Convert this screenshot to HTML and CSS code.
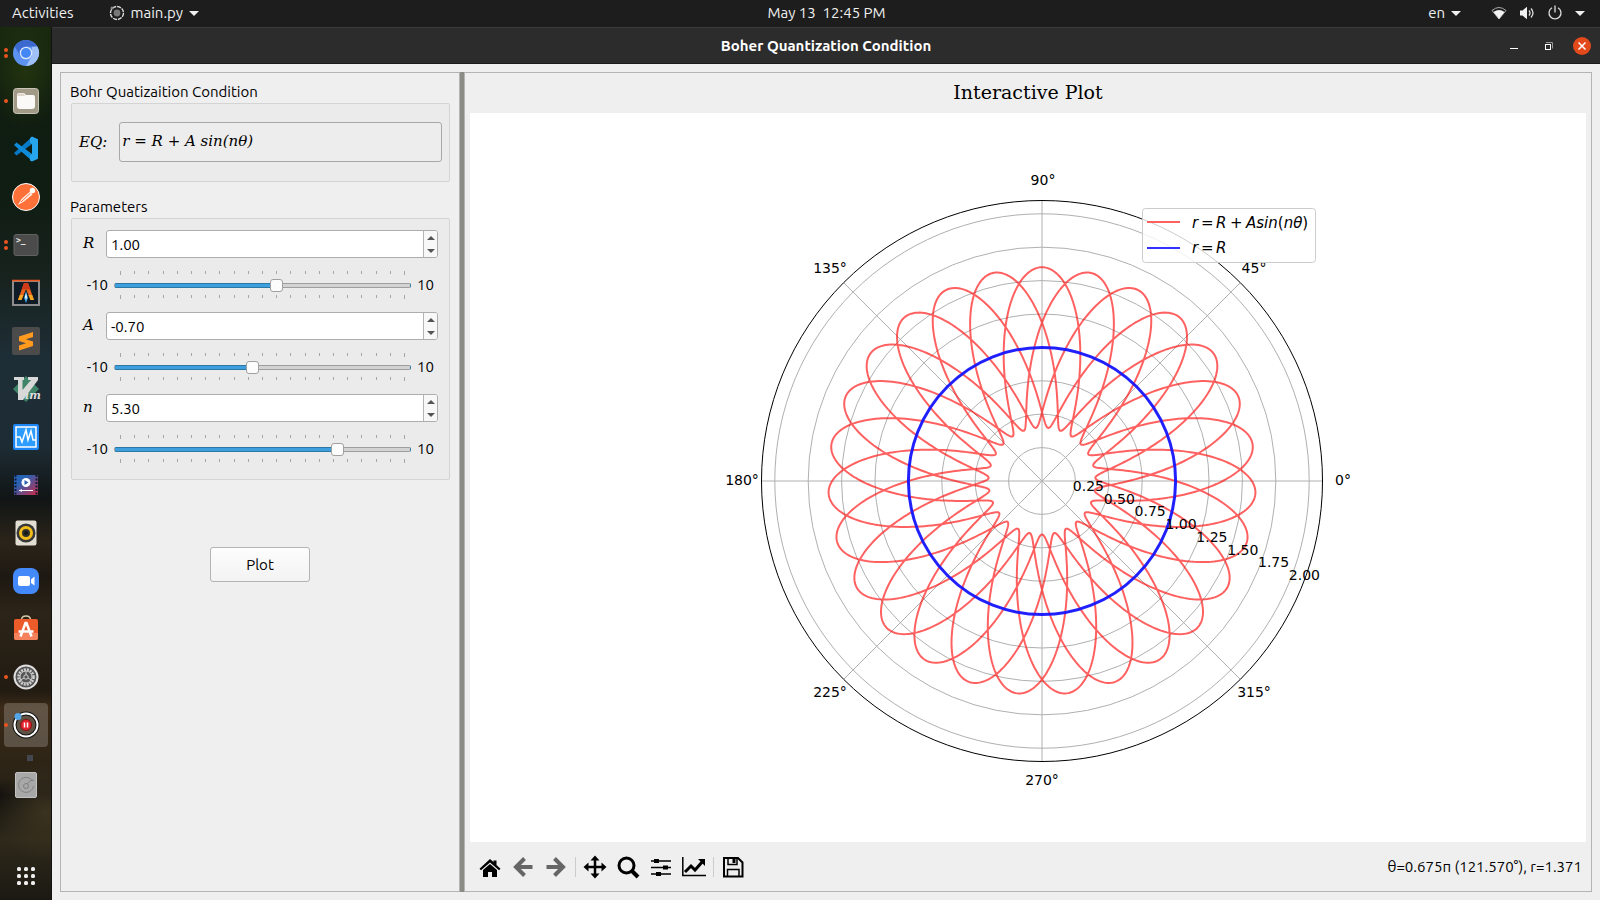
FILE: index.html
```html
<!DOCTYPE html>
<html lang="en">
<head>
<meta charset="utf-8">
<title>Boher Quantization Condition</title>
<link rel="stylesheet" href="styles.css">
</head>
<body>
<header class="topbar">
  <div class="top-left">
    <button class="top-btn">Activities</button>
    <button class="top-btn app-menu">
      <svg width="16" height="16" viewBox="0 0 16 16"><circle cx="8" cy="8" r="6.500" fill="none" stroke="#ddd" stroke-width="1.400" stroke-dasharray="4 1"/><circle cx="8" cy="8" r="3.400" fill="#777"/><circle cx="3" cy="3" r="1.500" fill="#888"/></svg>
      <span>main.py</span><i class="caret"></i>
    </button>
  </div>
  <button class="top-btn clock">May 13&nbsp; 12:45 PM</button>
  <div class="top-right">
    <button class="top-btn lang"><span>en</span><i class="caret"></i></button>
    <button class="top-btn tray" aria-label="System menu">
      <svg width="16" height="14" viewBox="0 0 16 14"><path d="M1 4.500Q8-1.500 15 4.500L8 13z" fill="none" stroke="#aaa"/><path d="M2.500 6Q8 2 13.500 6L8 13z" fill="#f2f2f2"/></svg>
      <svg width="16" height="14" viewBox="0 0 16 14"><path d="M1 4.500h2.500L8 .8v12.400L3.500 9.500H1z" fill="#f2f2f2"/><path d="M10 4.500q2 2.500 0 5M12 2.500q4 4.500 0 9" fill="none" stroke="#ddd" stroke-width="1.300"/></svg>
      <svg width="16" height="16" viewBox="0 0 16 16"><path d="M5 2.700a6 6 0 1 0 6 0M8 .5v7" fill="none" stroke="#ddd" stroke-width="1.300"/></svg>
      <i class="caret"></i>
    </button>
  </div>
</header>
<div class="desktop">
  <nav class="dock" aria-label="Dock">
    <button class="dock-item two" aria-label="Chromium"><svg width="28" height="28" viewBox="0 0 28 28"><circle cx="14" cy="14" r="13" fill="#5c93f0"/><path d="M2.700 7.500A13 13 0 0 1 25.300 7.500H14L8.500 17z" fill="#3b69cf"/><path d="M25.300 7.500A13 13 0 0 1 14 27l5.500-9.500L20 8z" fill="#a0c1f8"/><circle cx="14" cy="14" r="6.300" fill="#dce9fd"/><circle cx="14" cy="14" r="5" fill="#4387f4"/></svg></button>
    <button class="dock-item one" aria-label="Files"><svg width="28" height="28" viewBox="0 0 28 28"><rect x="1.500" y="1.500" width="25" height="25" rx="3" fill="#a09a87" stroke="#c9c5b8"/><path d="M5 8q0-2 2-2h5l2 2h7q2 0 2 2v9q0 3-3 3H8q-3 0-3-3z" fill="#faf9f7"/><path d="M5.500 9V8q0-1.500 1.500-1.500h4.700l1.500 2.500z" fill="#ddd8cb"/></svg></button>
    <button class="dock-item" aria-label="Visual Studio Code"><svg width="28" height="28" viewBox="0 0 28 28"><path d="M20 2v7L4.500 20.500 2 18z" fill="#0879c4"/><path d="M20 26v-7L4.500 7.500 2 10z" fill="#0f8bd8"/><path d="M20 1.500l6 2.700v19.600l-6 2.700-2-1V20l2-1V9l-2-1V3z" fill="#27a5ec"/></svg></button>
    <button class="dock-item" aria-label="Postman"><svg width="30" height="30" viewBox="0 0 30 30"><circle cx="15" cy="15" r="13.500" fill="#ff7139" stroke="#fff"/><circle cx="21.500" cy="8.500" r="2.700" fill="#fff"/><path d="M19 9.500l2.500 3-8.500 7-6 3.500 3.500-6z" fill="#fff0e8"/><path d="M10 20l9-8.500" stroke="#ff7139"/></svg></button>
    <button class="dock-item two" aria-label="Terminal"><svg width="28" height="28" viewBox="0 0 28 28"><rect x="2" y="3.500" width="24" height="21" rx="2" fill="#4b4b4b" stroke="#626262"/><text x="4" y="12" class="prompt">&gt;_</text></svg></button>
    <button class="dock-item" aria-label="Alacritty"><svg width="30" height="30" viewBox="0 0 30 30"><rect x="2" y="3" width="26" height="24" fill="#0f1c25" stroke="#8d8d8d" stroke-width="2"/><path d="M1 2.500h28" stroke="#e8571b" stroke-width="1.500"/><path d="M13 5h4l6 17h-3.500L15 11l-4.500 11H7z" fill="#e8631b"/><path d="M13 5h4l2.500 7L15 11l-4.500 1z" fill="#d03a1a"/><path d="M19.500 22l-2-5h3.700L23 22zM10.500 22l2-5H8.800L7 22z" fill="#f7a823"/><path d="M15 13l2 7-2 5-2-5z" fill="#38a0dd"/><path d="M15 15l1 4-1 3-1-3z" fill="#fff"/></svg></button>
    <button class="dock-item" aria-label="Sublime Text"><svg width="28" height="28" viewBox="0 0 28 28"><rect width="28" height="28" rx="2" fill="#4b4b4b"/><path d="M7 9.500L21 5v5l-7 2.300 7 2.200v4.500L7 23.500v-5l7-2.200-7-2.300z" fill="#ff9a1f"/></svg></button>
    <button class="dock-item" aria-label="Vim"><svg width="30" height="28" viewBox="0 0 30 28"><path d="M15 1l13 13-13 13L2 14z" fill="#3f8368"/><path d="M3 2h10v3h-1.500v10L20 5h-3V2h10v3L12 25H7V5H3z" fill="#d8d8d8"/><text x="14" y="24" class="vim">im</text></svg></button>
    <button class="dock-item" aria-label="System Monitor"><svg width="28" height="28" viewBox="0 0 28 28"><rect x="1" y="1" width="26" height="26" rx="2" fill="#1d86f4"/><rect x="4" y="4" width="20" height="20" fill="#2d9cff" stroke="#fff" stroke-width="1.500"/><path d="M4 14h4l2 5 4-12 2 10 3-9 2 9h3" fill="none" stroke="#fff" stroke-width="1.500"/></svg></button>
    <button class="dock-item video" aria-label="Video editor"><svg width="28" height="22" viewBox="0 0 28 22"><defs><linearGradient id="vid" x2="1" y2="1"><stop offset=".3" stop-color="#2862b4"/><stop offset="1" stop-color="#d02b46"/></linearGradient></defs><rect x="2" y="1" width="24" height="20" fill="url(#vid)"/><path d="M3.500 1v20M24.500 1v20" stroke="#101b38" stroke-width="2" stroke-dasharray="2 1.500"/><circle cx="14" cy="8.500" r="4.500" fill="#fff"/><path d="M12.500 6v5l4-2.500z" fill="#2862b4"/><path d="M7 16.500h14" stroke="#fff"/><path d="M7 16.500l3-1.500v3z" fill="#fff"/></svg></button>
    <button class="dock-item" aria-label="Rhythmbox"><svg width="28" height="28" viewBox="0 0 28 28"><rect x="3.500" y="1.500" width="21" height="25" rx="2" fill="#e2ded3"/><circle cx="14" cy="14" r="9.500" fill="#383838"/><circle cx="14" cy="14" r="5.500" fill="#30302c" stroke="#f2bd18" stroke-width="3"/><circle cx="14" cy="14" r="2" fill="#181818"/></svg></button>
    <button class="dock-item" aria-label="Zoom"><svg width="28" height="28" viewBox="0 0 28 28"><rect x="1" y="1" width="26" height="26" rx="8" fill="#4389fa"/><rect x="6" y="9" width="12" height="10" rx="2" fill="#fff"/><path d="M19 12.500L22.500 9.500v9L19 16z" fill="#fff"/></svg></button>
    <button class="dock-item" aria-label="Ubuntu Software"><svg width="28" height="28" viewBox="0 0 28 28"><path d="M9.500 5q0-4 4.500-4t4.500 4" fill="none" stroke="#d8c8a8" stroke-width="1.500"/><rect x="2" y="4" width="24" height="21" rx="2" fill="#ee5b2b"/><path d="M2 18h24v5q0 2-2 2H4q-2 0-2-2z" fill="#f5825c"/><path d="M8.500 21.500L13.500 8h1l5 13.500M6.500 16.500h15" fill="none" stroke="#fff" stroke-width="2.500"/></svg></button>
    <button class="dock-item one" aria-label="Settings"><svg width="28" height="28" viewBox="0 0 28 28"><circle cx="14" cy="14" r="11.500" fill="#555" stroke="#dedede" stroke-width="2"/><circle cx="14" cy="14" r="7.500" fill="none" stroke="#cfcfcf" stroke-width="2.500" stroke-dasharray="2 1"/><circle cx="14" cy="14" r="6" fill="none" stroke="#cfcfcf"/><path d="M14 14V8M14 14l5.500 3M14 14l-5.500 3" stroke="#cfcfcf"/><circle cx="14" cy="14" r="2.200" fill="#555" stroke="#cfcfcf"/></svg></button>
    <button class="dock-item one active" aria-label="main.py"><svg width="30" height="30" viewBox="0 0 30 30"><circle cx="15" cy="15" r="11.500" fill="none" stroke="#111" stroke-width="4"/><circle cx="15" cy="15" r="11.500" fill="none" stroke="#fff" stroke-width="2"/><circle cx="7" cy="6.500" r="3.500" fill="#54a6e8"/><circle cx="15" cy="15" r="5.500" fill="#e3222e" stroke="#811"/><path d="M13.500 12.500v5M16.500 12.500v5" stroke="#fff" stroke-width="1.500"/></svg></button>
    <i class="dock-mark"></i>
    <button class="dock-item" aria-label="Disk"><svg width="28" height="28" viewBox="0 0 28 28"><rect x="3.500" y="1.500" width="21" height="25" rx="1.500" fill="#a8a8a8" stroke="#c2c2c2"/><path d="M20.500 10a7.500 7.500 0 1 0 1 5" fill="none" stroke="#808080"/><circle cx="14" cy="15" r="2.500" fill="none" stroke="#808080"/><path d="M15 13q4-5 7-4" fill="none" stroke="#808080"/></svg></button>
    <button class="dock-item apps" aria-label="Show applications"><svg width="20" height="20" viewBox="0 0 20 20" fill="#eee"><rect x="1" y="1" width="4" height="4" rx="1.500"/><rect x="8" y="1" width="4" height="4" rx="1.500"/><rect x="15" y="1" width="4" height="4" rx="1.500"/><rect x="1" y="8" width="4" height="4" rx="1.500"/><rect x="8" y="8" width="4" height="4" rx="1.500"/><rect x="15" y="8" width="4" height="4" rx="1.500"/><rect x="1" y="15" width="4" height="4" rx="1.500"/><rect x="8" y="15" width="4" height="4" rx="1.500"/><rect x="15" y="15" width="4" height="4" rx="1.500"/></svg></button>
  </nav>
  <section class="window">
    <div class="titlebar">
      <h1 class="title">Boher Quantization Condition</h1>
      <div class="controls">
        <button aria-label="Minimize"><svg width="18" height="18"><path d="M5 11.500h8" stroke="#fff"/></svg></button>
        <button aria-label="Restore"><svg width="18" height="18"><path d="M7 5.500h6.500v6" fill="none" stroke="#999"/><rect x="6.500" y="7.500" width="5" height="5" fill="none" stroke="#fff"/></svg></button>
        <button aria-label="Close"><svg width="18" height="18"><circle cx="9" cy="9" r="9" fill="#e2491b"/><path d="M5.500 5.500l7 7M12.500 5.500l-7 7" stroke="#fff" stroke-width="1.500"/></svg></button>
      </div>
    </div>
    <main class="content">
      <form class="side" onsubmit="return false">
        <h2 class="group-title">Bohr Quatizaition Condition</h2>
        <div class="group eq-group">
          <label class="math" for="eq">EQ:</label>
          <input class="eq-input" id="eq" type="text" value="r = R + A sin(nθ)" readonly>
        </div>
        <h2 class="group-title params-title">Parameters</h2>
        <div class="group params">
          <div class="param">
            <label class="math" for="R">R</label>
            <div class="spin"><input id="R" type="number" min="-10" max="10" step="0.01" value="1.00"><div class="steps"><button type="button" aria-label="Increase R"><i class="up"></i></button><button type="button" aria-label="Decrease R"><i class="down"></i></button></div></div>
          </div>
          <div class="slide"><span class="min">-10</span><div class="track"><div class="ticks"></div><input type="range" aria-label="R" min="-10" max="10" step="0.1" value="1"><div class="ticks"></div></div><span>10</span></div>
          <div class="param">
            <label class="math" for="A">A</label>
            <div class="spin"><input id="A" type="number" min="-10" max="10" step="0.01" value="-0.70"><div class="steps"><button type="button" aria-label="Increase A"><i class="up"></i></button><button type="button" aria-label="Decrease A"><i class="down"></i></button></div></div>
          </div>
          <div class="slide"><span class="min">-10</span><div class="track"><div class="ticks"></div><input type="range" aria-label="A" min="-10" max="10" step="0.1" value="-0.7"><div class="ticks"></div></div><span>10</span></div>
          <div class="param">
            <label class="math" for="n">n</label>
            <div class="spin"><input id="n" type="number" min="-10" max="10" step="0.01" value="5.30"><div class="steps"><button type="button" aria-label="Increase n"><i class="up"></i></button><button type="button" aria-label="Decrease n"><i class="down"></i></button></div></div>
          </div>
          <div class="slide"><span class="min">-10</span><div class="track"><div class="ticks"></div><input type="range" aria-label="n" min="-10" max="10" step="0.1" value="5.3"><div class="ticks"></div></div><span>10</span></div>
        </div>
        <button class="plot-btn" type="button">Plot</button>
      </form>
      <div class="splitter"></div>
      <section class="plot-pane">
        <h2 class="plot-title">Interactive Plot</h2>
        <svg class="chart" viewBox="-572 -368 1116 729" role="img" aria-label="Polar plot">
          <g id="grid" class="grid"></g>
          <path id="curve" class="curve"/>
          <circle class="base" r="133.600"/>
          <circle class="frame" r="280.500"/>
          <g class="angles">
            <text x="293" y="4" class="start">0°</text>
            <text x="212" y="-208">45°</text>
            <text x="1" y="-296">90°</text>
            <text x="-212" y="-208">135°</text>
            <text x="-300" y="4">180°</text>
            <text x="-212" y="216">225°</text>
            <text x="0" y="304">270°</text>
            <text x="212" y="216">315°</text>
          </g>
          <g id="radii" class="radii"></g>
          <g class="legend">
            <rect x="100.500" y="-272.500" width="173" height="54" rx="3"/>
            <path d="M105 -259h33" class="key red"/>
            <path d="M105 -233h33" class="key blue"/>
            <text y="-253"><tspan x="150">r</tspan><tspan x="159" class="op">=</tspan><tspan x="174">R</tspan><tspan x="188" class="op">+</tspan><tspan x="204">Asin</tspan><tspan class="op">(</tspan><tspan>nθ</tspan><tspan class="op">)</tspan></text>
            <text y="-228"><tspan x="150">r</tspan><tspan x="159" class="op">=</tspan><tspan x="174">R</tspan></text>
          </g>
        </svg>
        <div class="toolbar">
          <button aria-label="Home"><svg width="24" height="24" viewBox="0 0 24 24"><path d="M12 4l3.500 3V5.500h3V10l4 3.700-1.500 1.500L12 7.500l-9 7.700-1.500-1.500z"/><path d="M12 9l7 6v7h-5v-5h-4v5H5v-7z"/></svg></button>
          <button aria-label="Back"><svg width="24" height="24" viewBox="0 0 24 24"><path d="M21.500 12H5M13.500 3.500L5 12l8.500 8.500" fill="none" stroke="#666" stroke-width="4"/></svg></button>
          <button aria-label="Forward"><svg width="24" height="24" viewBox="0 0 24 24"><path d="M2.500 12H19M10.500 3.500L19 12l-8.500 8.500" fill="none" stroke="#666" stroke-width="4"/></svg></button>
          <i class="sep"></i>
          <button aria-label="Pan"><svg width="24" height="24" viewBox="0 0 24 24"><path d="M12 3v18M3 12h18" stroke="#000" stroke-width="2.500"/><path d="M12 .5l4.500 5h-9zM12 23.500l4.500-5h-9zM.5 12l5-4.500v9zM23.500 12l-5-4.500v9z"/></svg></button>
          <button aria-label="Zoom to rectangle"><svg width="24" height="24" viewBox="0 0 24 24"><circle cx="10.500" cy="10.500" r="7.500" fill="none" stroke="#000" stroke-width="3"/><path d="M16 16l6 6" stroke="#000" stroke-width="4"/></svg></button>
          <button aria-label="Configure subplots"><svg width="24" height="24" viewBox="0 0 24 24"><path d="M2 6h20M2 12.500h20M2 19h20" stroke="#000" stroke-width="1.500"/><path d="M5 4h5v4H5zM14 10.500h5v4h-5zM7 17h5v4H7z"/></svg></button>
          <button aria-label="Edit axes"><svg width="24" height="24" viewBox="0 0 24 24"><path d="M.8 2v18.500H24" fill="none" stroke="#000" stroke-width="1.500"/><path d="M3 17l6-6 4 4 8-9" fill="none" stroke="#000" stroke-width="3"/><path d="M16 4h7v7z"/></svg></button>
          <i class="sep"></i>
          <button aria-label="Save"><svg width="24" height="24" viewBox="0 0 24 24"><path d="M3 3h14l4.500 4.500v14H3z" fill="none" stroke="#000" stroke-width="2"/><path d="M7 3v6.500h9V3M6.500 21.500V14.500h11.500v7" fill="none" stroke="#000" stroke-width="1.500"/><path d="M11.500 3.500h3V8h-3z"/></svg></button>
          <output class="coords">θ=0.675π (121.570°), r=1.371</output>
        </div>
      </section>
    </main>
  </section>
</div>
<script src="script.js"></script>
</body>
</html>
```
FILE: styles.css
```css
* { box-sizing: border-box; }
body {
  margin: 0;
  height: 100vh;
  display: flex;
  flex-direction: column;
  overflow: hidden;
  font: 15px/20px "Ubuntu", "Noto Sans", sans-serif;
  color: #000;
  background: #efefef;
}
button { font: inherit; color: inherit; padding: 0; border: 0; background: none; }
h1, h2 { margin: 0; font: inherit; }
svg { display: block; flex: none; }

.topbar {
  display: grid;
  grid-template-columns: 1fr auto 1fr;
  align-items: center;
  height: 27px;
  padding: 0 15px 1px 12px;
  background: #1d1d1d;
  color: #f0f0f0;
  flex: none;
}
.top-left, .top-right, .top-btn { display: flex; align-items: center; }
.top-left { gap: 35px; }
.top-right { justify-content: flex-end; gap: 30px; }
.clock { padding-left: 56px; }
.app-menu, .lang { gap: 6px; }
.tray { gap: 12px; }
.caret { border: 5px solid transparent; border-top-color: #f0f0f0; border-bottom: 0; }

.desktop { flex: 1; display: flex; min-height: 0; }
.dock {
  width: 52px;
  flex: none;
  display: flex;
  flex-direction: column;
  align-items: center;
  padding-top: 2px;
  background:
    radial-gradient(40px 60px at 50% 5%, #22330f 0, transparent 100%),
    radial-gradient(50px 50px at 90% 90%, #3b3320 0, transparent 100%),
    linear-gradient(#17280f 0, #0f1c10 8%, #101d13 20%, #18231f 29%, #1e2e37 38%, #1d2c34 48%, #111515 54%, #2b241a 59%, #1d1811 63%, #2c2418 67%, #211b12 76%, #3b2a17 78%, #2a2316 86%, #14120f 88%, #2e291a 93%, #1c1913 100%);
  border-right: 1px solid #111;
}
.dock-item {
  position: relative;
  width: 44px;
  height: 44px;
  margin: 2px 0;
  flex: none;
  display: flex;
  align-items: center;
  justify-content: center;
}
.active { background: rgba(255, 255, 255, .2); border-radius: 4px; }
.one::before, .two::before, .two::after {
  content: "";
  position: absolute;
  left: 0;
  top: 20px;
  width: 4px;
  height: 4px;
  border-radius: 50%;
  background: #e95420;
}
.two::before { top: 17px; }
.two::after { top: 23px; }
.dock-mark { width: 6px; height: 6px; margin: 6px 0 0 8px; background: #454750; flex: none; }
.apps { margin-top: auto; }
.prompt { font: bold 8px "DejaVu Sans Mono", monospace; fill: #eee; }
.vim { font: italic bold 11px "DejaVu Serif", serif; fill: #ddd; }

.window { flex: 1; min-width: 0; display: flex; flex-direction: column; }
.titlebar {
  position: relative;
  display: flex;
  align-items: center;
  justify-content: center;
  height: 37px;
  flex: none;
  background: #2c2c2c;
  border-top: 1px solid #3a3a3a;
  border-bottom: 1px solid #1c1c1c;
  color: #fff;
}
.title { font-weight: 700; }
.controls { position: absolute; right: 9px; display: flex; gap: 16px; }

.content {
  flex: 1;
  min-height: 0;
  display: grid;
  grid-template-columns: 400px 4px 1fr;
  padding: 8px;
}
.side, .plot-pane { display: flex; flex-direction: column; border: 1px solid #b4b4b4; min-height: 0; }
.side { padding: 9px; }
.splitter { background: #8c8c86; }
.group { margin: 1px 0 0 1px; border: 1px solid #d4d4d4; border-radius: 2px; background: #ebebeb; }
.math { font: italic 15px/20px "DejaVu Serif", serif; }
.eq-group { display: flex; align-items: center; gap: 12px; height: 79px; padding: 0 7px 1px; }
.eq-input {
  flex: 1;
  min-width: 0;
  height: 40px;
  padding: 0 2px 3px;
  border: 1px solid #a8a8a8;
  border-radius: 3px;
  background: #ededed;
  font: italic 15px "DejaVu Serif", serif;
}
.params-title { margin-top: 15px; }
.params { padding: 11px 11px 3px; }
.param { display: flex; gap: 11px; height: 28px; }
.param .math { width: 12px; line-height: 26px; }
.spin { flex: 1; display: flex; border: 1px solid #adadad; border-radius: 3px; background: #fff; overflow: hidden; }
.spin input { flex: 1; min-width: 0; border: 0; padding: 1px 4px 0; font: inherit; background: none; appearance: textfield; }
.spin input::-webkit-inner-spin-button { appearance: none; margin: 0; }
.steps { width: 14px; display: flex; flex-direction: column; border-left: 1px solid #b4b4b4; background: #f8f8f8; }
.steps button { flex: 1; display: flex; align-items: center; justify-content: center; }
.up, .down { border: 4px solid transparent; border-top: 0; border-bottom-color: #555; }
.down { border-top: 4px solid #555; border-bottom: 0; }
.slide { display: flex; align-items: center; gap: 6px; height: 54px; padding-right: 4px; }
.slide .min { width: 25px; text-align: right; }
.track { flex: 1; display: flex; flex-direction: column; }
.ticks { display: flex; justify-content: space-between; height: 4px; padding: 0 6px; }
.ticks i { width: 1px; height: 3px; background: #a5a5a5; }
.ticks i:first-child, .ticks i:last-child { height: 4px; }
.track input {
  appearance: none;
  width: 100%;
  height: 20px;
  margin: 0;
  background: none;
}
.track input::-webkit-slider-runnable-track {
  height: 5px;
  border: 1px solid rgba(0, 0, 0, .25);
  border-radius: 2px;
  background: linear-gradient(90deg, #3d9fdd var(--fill), #d3d3d3 var(--fill));
}
.track input::-webkit-slider-thumb {
  appearance: none;
  width: 13px;
  height: 13px;
  margin-top: -5px;
  border: 1px solid #a0a0a0;
  border-radius: 3px;
  background: #fcfcfc;
}
.plot-btn {
  align-self: center;
  width: 100px;
  height: 35px;
  margin-top: 67px;
  border: 1px solid #b4b4b4;
  border-radius: 3px;
  background: linear-gradient(#fdfdfd, #f3f3f3);
}

.plot-title { height: 40px; text-align: center; font: 19px/38px "DejaVu Serif", serif; flex: none; }
.chart { flex: 1; min-height: 0; margin: 0 5px; background: #fff; font-family: "DejaVu Sans", sans-serif; }
.grid { fill: none; stroke: #b0b0b0; stroke-width: 1; }
.curve { fill: none; stroke: #ff0000; stroke-opacity: .62; stroke-width: 2; stroke-linejoin: round; }
.base { fill: none; stroke: #1616ff; stroke-opacity: .95; stroke-width: 3; }
.frame { fill: none; stroke: #000; stroke-width: 1; }
.angles { font-size: 14px; text-anchor: middle; }
.angles .start { text-anchor: start; }
.radii { font-size: 14px; }
.legend { font-size: 15px; font-style: oblique; }
.legend rect { fill: #fff; fill-opacity: .8; stroke: #ccc; }
.op { font-style: normal; }
.key { stroke-width: 2; }
.red { stroke: #ff6161; }
.blue { stroke: #3333ff; }

.toolbar { display: flex; align-items: center; gap: 9px; height: 49px; padding: 0 9px 0 13px; flex: none; }
.sep { width: 1px; height: 20px; margin: 0 -2px; background: #ccc; }
.coords { margin-left: auto; }
```
FILE: script.js
```js
const NS = "http://www.w3.org/2000/svg";
const UNIT = 133.6;

function add(parent, name, attrs, text) {
  const el = document.createElementNS(NS, name);
  for (const key in attrs) el.setAttribute(key, attrs[key]);
  if (text) el.textContent = text;
  parent.appendChild(el);
}

const grid = document.getElementById("grid");
const radii = document.getElementById("radii");
for (let i = 1; i <= 8; i++) {
  const r = UNIT * i / 4;
  add(grid, "circle", { r });
  const a = 22.5 * Math.PI / 180;
  add(radii, "text", { x: r * Math.cos(a), y: r * Math.sin(a) - 3 }, (i / 4).toFixed(2));
}
for (let i = 0; i < 8; i++) {
  const a = i * Math.PI / 4;
  add(grid, "line", { x2: 2.1 * UNIT * Math.cos(a), y2: 2.1 * UNIT * Math.sin(a) });
}

const points = [];
for (let i = 0; i <= 3600; i++) {
  const t = i / 3600 * 10 * Math.PI;
  const r = UNIT * (1 - 0.6 * Math.sin(5.4 * t));
  points.push((r * Math.cos(t)).toFixed(2) + " " + (-r * Math.sin(t)).toFixed(2));
}
document.getElementById("curve").setAttribute("d", "M" + points.join("L"));

document.querySelectorAll(".ticks").forEach(row => {
  for (let i = 0; i <= 20; i++) row.appendChild(document.createElement("i"));
});

document.querySelectorAll("input[type=range]").forEach(range => {
  const update = () => range.style.setProperty("--fill", (Number(range.value) + 10) * 5 + "%");
  range.addEventListener("input", update);
  update();
});
```
